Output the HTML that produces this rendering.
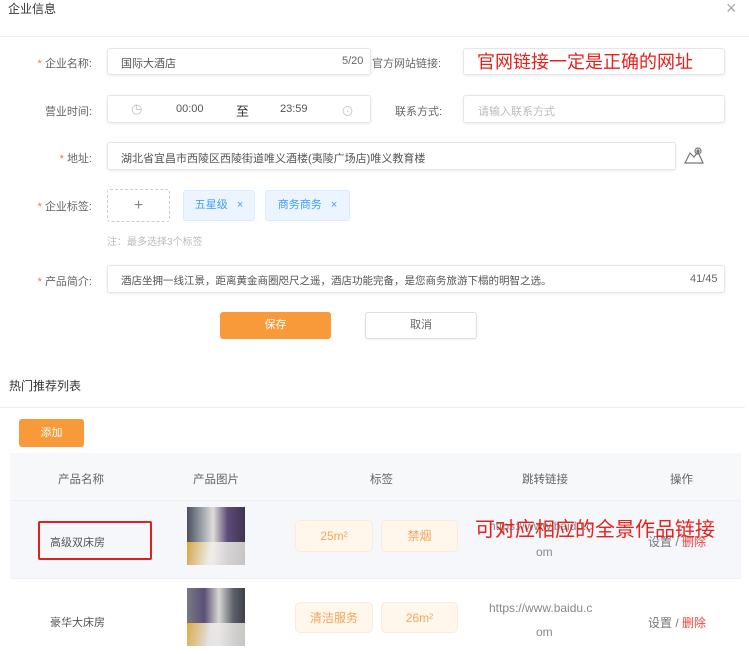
<!DOCTYPE html><html><head><meta charset="utf-8"><style>
*{margin:0;padding:0;box-sizing:border-box}
body{width:749px;height:654px;overflow:hidden;background:#fff;font-family:"Liberation Sans","Noto Sans CJK SC",sans-serif;font-size:11px;color:#555;position:relative}
.a{position:absolute;white-space:nowrap}
.inp{position:absolute;border:1px solid #e4e6ea;border-radius:3px;background:#fff;box-shadow:0 1px 3px rgba(0,0,0,.08)}
.lbl{position:absolute;text-align:right;width:92px;left:0;color:#666;font-size:11px}
.lbl b{color:#f56c6c;font-weight:normal;margin-right:3px}
.tag{position:absolute;background:#ecf5ff;border:1px solid #d9ecff;border-radius:3px;color:#409eff;font-size:11px;text-align:center;line-height:29px}
.ot{position:absolute;background:#fff6ec;border:1px solid #fdebd6;border-radius:5px;color:#f3a65a;font-size:12px;text-align:center;line-height:30px}
.img{position:absolute;width:58px;height:58px;background:linear-gradient(90deg,#4a4f5c 0,#9aa0a8 25%,#e0ddd8 45%,#5d4a78 70%,#3e3550 100%)}
.img:after{content:"";position:absolute;left:0;bottom:0;width:100%;height:40%;background:linear-gradient(100deg,#e8b040 0,#f0f0ee 40%,#d6d3cf 100%);opacity:.9}
</style></head><body>
<div class="a" style="left:8px;top:0px;font-size:12px;color:#333">企业信息</div>
<div class="a" style="left:726px;top:-2px;font-size:18px;color:#aaa">×</div>
<div class="a" style="left:0;top:36px;width:749px;height:1px;background:#eee"></div>

<div class="lbl" style="top:55px"><b>*</b>企业名称:</div>
<div class="inp" style="left:107px;top:48px;width:264px;height:27px"></div>
<div class="a" style="left:121px;top:55px;color:#555">国际大酒店</div>
<div class="a" style="left:342px;top:55px;color:#666">5/20</div>
<div class="a" style="left:372px;top:55px;color:#666">官方网站链接:</div>
<div class="inp" style="left:463px;top:48px;width:262px;height:27px"></div>
<div class="a" style="left:477px;top:48px;font-size:18px;color:#e8201c">官网链接一定是正确的网址</div>

<div class="lbl" style="top:103px">营业时间:</div>
<div class="inp" style="left:107px;top:95px;width:264px;height:28px"></div>
<div class="a" style="left:131px;top:101px;color:#bbb;font-size:13px">◷</div>
<div class="a" style="left:176px;top:103px;color:#555">00:00</div>
<div class="a" style="left:236px;top:101px;color:#333;font-size:13px">至</div>
<div class="a" style="left:280px;top:103px;color:#555">23:59</div>
<div class="a" style="left:341px;top:101px;color:#ccc;font-size:13px">⊙</div>
<div class="a" style="left:395px;top:103px;color:#666">联系方式:</div>
<div class="inp" style="left:463px;top:95px;width:262px;height:28px"></div>
<div class="a" style="left:478px;top:103px;color:#bbb">请输入联系方式</div>

<div class="lbl" style="top:150px"><b>*</b>地址:</div>
<div class="inp" style="left:107px;top:142px;width:569px;height:28px"></div>
<div class="a" style="left:121px;top:150px;color:#555">湖北省宜昌市西陵区西陵街道唯义酒楼(夷陵广场店)唯义教育楼</div>
<svg class="a" style="left:683px;top:145px" width="22" height="22" viewBox="0 0 22 22" fill="none" stroke="#777" stroke-width="1.2"><path d="M2 18 L7 8 L11 12 L15 7 L20 18 Z"/><circle cx="15" cy="6" r="3"/><circle cx="15" cy="6" r="1" fill="#777"/></svg>

<div class="lbl" style="top:198px"><b>*</b>企业标签:</div>
<div class="a" style="left:107px;top:189px;width:63px;height:33px;border:1px dashed #ccc;border-radius:3px;text-align:center;line-height:31px;font-size:16px;color:#888">+</div>
<div class="tag" style="left:183px;top:190px;width:72px;height:31px">五星级 <span style="margin-left:6px">×</span></div>
<div class="tag" style="left:265px;top:190px;width:85px;height:31px">商务商务 <span style="margin-left:6px">×</span></div>
<div class="a" style="left:107px;top:233px;color:#bbb;font-size:10px">注：最多选择3个标签</div>

<div class="lbl" style="top:273px"><b>*</b>产品简介:</div>
<div class="inp" style="left:107px;top:265px;width:618px;height:28px"></div>
<div class="a" style="left:121px;top:273px;color:#555;font-size:10.5px">酒店坐拥一线江景，距离黄金商圈咫尺之遥，酒店功能完备，是您商务旅游下榻的明智之选。</div>
<div class="a" style="left:690px;top:273px;color:#666">41/45</div>

<div class="a" style="left:220px;top:312px;width:111px;height:27px;background:#f8993a;border-radius:3px;color:#fff;text-align:center;line-height:27px">保存</div>
<div class="a" style="left:365px;top:312px;width:112px;height:27px;border:1px solid #ddd;border-radius:3px;color:#666;text-align:center;line-height:25px;box-shadow:0 1px 2px rgba(0,0,0,.06)">取消</div>

<div class="a" style="left:9px;top:377px;font-size:12px;color:#333">热门推荐列表</div>
<div class="a" style="left:0;top:407px;width:745px;height:1px;background:#eee"></div>
<div class="a" style="left:19px;top:419px;width:65px;height:28px;background:#f8993a;border-radius:3px;color:#fff;text-align:center;line-height:28px">添加</div>

<div class="a" style="left:10px;top:453px;width:731px;height:48px;background:#f7f8fa;border-bottom:1px solid #edf0f5"></div>
<div class="a" style="left:58px;top:471px;color:#666;font-size:11.5px">产品名称</div>
<div class="a" style="left:193px;top:471px;color:#666;font-size:11.5px">产品图片</div>
<div class="a" style="left:370px;top:471px;color:#666;font-size:11.5px">标签</div>
<div class="a" style="left:522px;top:471px;color:#666;font-size:11.5px">跳转链接</div>
<div class="a" style="left:670px;top:471px;color:#666;font-size:11.5px">操作</div>

<div class="a" style="left:10px;top:501px;width:731px;height:78px;background:#f5f7fb;border-bottom:1px solid #edf0f5"></div>
<div class="a" style="left:38px;top:521px;width:114px;height:39px;border:2px solid #e02020;border-radius:2px"></div>
<div class="a" style="left:50px;top:534px;color:#555">高级双床房</div>
<div class="img" style="left:187px;top:507px"></div>
<div class="ot" style="left:295px;top:520px;width:78px;height:32px">25m²</div>
<div class="ot" style="left:381px;top:520px;width:77px;height:32px">禁烟</div>
<div class="a" style="left:489px;top:519px;color:#888;font-size:12px">https://www.baidu.c</div>
<div class="a" style="left:536px;top:545px;color:#888;font-size:12px">om</div>
<div class="a" style="left:648px;top:533px;color:#777;font-size:12px">设置 / <span style="color:#f0443c">删除</span></div>
<div class="a" style="left:475px;top:513px;font-size:20px;color:#e8201c">可对应相应的全景作品链接</div>

<div class="a" style="left:50px;top:614px;color:#555">豪华大床房</div>
<div class="img" style="left:187px;top:588px;background:linear-gradient(90deg,#777a82 0,#5b4f78 30%,#d9d7d3 55%,#5c606a 80%,#3f4048 100%)"></div>
<div class="ot" style="left:295px;top:602px;width:78px;height:31px">清洁服务</div>
<div class="ot" style="left:381px;top:602px;width:77px;height:31px">26m²</div>
<div class="a" style="left:489px;top:601px;color:#888;font-size:12px">https://www.baidu.c</div>
<div class="a" style="left:536px;top:625px;color:#888;font-size:12px">om</div>
<div class="a" style="left:648px;top:614px;color:#777;font-size:12px">设置 / <span style="color:#f0443c">删除</span></div>
</body></html>
